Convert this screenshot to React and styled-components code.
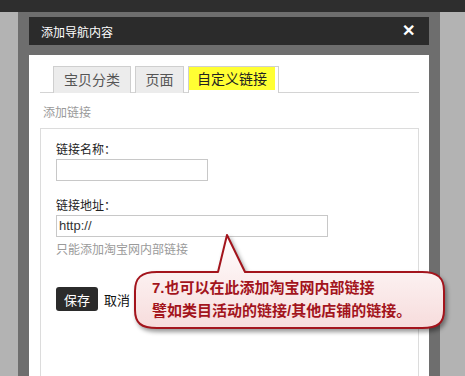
import React from "react";
import styled, { createGlobalStyle } from "styled-components";

const GlobalStyle = createGlobalStyle`
  html, body {
    margin: 0;
    padding: 0;
    background: #b3b3b3;
    font-family: "Liberation Sans", "Noto Sans CJK SC", sans-serif;
    overflow: hidden;
  }
`;

const Page = styled.div`
  position: relative;
  width: 465px;
  height: 376px;
  overflow: hidden;
`;

const TopBar = styled.div`
  height: 12px;
  background: #2e2e2e;
`;

const Frame = styled.div`
  margin-left: 18px;
  width: 400px;
  height: 364px;
  padding: 5px 11px 0 11px;
  background: #6e6e6e;
  display: flex;
  flex-direction: column;
  gap: 10px;
`;

const TitleBar = styled.div`
  height: 28px;
  background: #2b2b2b;
  display: flex;
  align-items: center;
  justify-content: space-between;
  padding: 0 12px 0 12px;
  color: #fff;
  font-size: 12px;
`;

const Close = styled.span`
  font-size: 16px;
  font-weight: bold;
  line-height: 1;
  margin-right: 2px;
`;

const Panel = styled.div`
  flex: 1;
  background: #fff;
  padding: 11px 10px 0 11px;
  display: flex;
  flex-direction: column;
`;

const Tabs = styled.div`
  display: flex;
  gap: 4px;
  padding-left: 13px;
  border-bottom: 1px solid #d4d4d4;
  height: 26px;
`;

const Tab = styled.div`
  box-sizing: border-box;
  height: 27px;
  width: ${p => p.$w}px;
  border: 1px solid #cfcfcf;
  border-bottom: none;
  background: ${p => (p.$active ? "#fff" : "#ececec")};
  color: ${p => (p.$active ? "#222" : "#555")};
  font-size: 14px;
  display: flex;
  align-items: flex-start;
  padding: 0 ${p => (p.$active ? "3px" : "0")} 0 0;
  justify-content: ${p => (p.$active ? "flex-start" : "center")};
  line-height: 26px;
`;

const Highlight = styled.span`
  display: block;
  background: #ffff33;
  height: 23px;
  line-height: 24px;
  flex: 1;
  text-align: center;
`;

const SectionTitle = styled.div`
  font-size: 12px;
  color: #9a9a9a;
  padding: 13px 0 0 3px;
  height: 22px;
  line-height: 14px;
`;

const Box = styled.div`
  flex: 1;
  border: 1px solid #dcdcdc;
  border-bottom: none;
  padding: 13px 16px 0 15px;
  display: flex;
  flex-direction: column;
`;

const Label = styled.div`
  font-size: 12px;
  color: #222;
  line-height: 16px;
  height: 17px;
`;

const Input = styled.div`
  box-sizing: border-box;
  width: ${p => p.$w}px;
  height: 22px;
  border: 1px solid #c8c8c8;
  font-size: 13px;
  color: #333;
  line-height: 20px;
  padding-left: 2px;
  margin-bottom: ${p => p.$mb}px;
`;

const Hint = styled.div`
  font-size: 12px;
  color: #9a9a9a;
  line-height: 16px;
  margin-top: 5px;
`;

const Actions = styled.div`
  display: flex;
  align-items: center;
  gap: 6px;
  margin-top: 29px;
`;

const SaveButton = styled.div`
  width: 42px;
  height: 24px;
  border-radius: 3px;
  background: #2b2b2b;
  color: #fff;
  font-size: 13px;
  display: flex;
  align-items: center;
  justify-content: center;
`;

const CancelLink = styled.span`
  font-size: 13px;
  color: #111;
`;

const Callout = styled.div`
  position: absolute;
  left: 133px;
  top: 233px;
  width: 316px;
  height: 104px;
`;

const CalloutShape = styled.svg`
  position: absolute;
  left: 0;
  top: 0;
  filter: drop-shadow(2px 3px 2px rgba(0, 0, 0, 0.4));
`;

const CalloutText = styled.div`
  position: absolute;
  left: 19px;
  top: 43px;
  font-size: 15px;
  font-weight: bold;
  line-height: 23px;
  color: #a3141c;
  white-space: nowrap;
`;

export default function App() {
  return (
    <Page>
      <GlobalStyle />
      <TopBar />
      <Frame>
        <TitleBar>
          <span>添加导航内容</span>
          <Close>✕</Close>
        </TitleBar>
        <Panel>
          <Tabs>
            <Tab $w={78}>宝贝分类</Tab>
            <Tab $w={49}>页面</Tab>
            <Tab $w={91} $active>
              <Highlight>自定义链接</Highlight>
            </Tab>
          </Tabs>
          <SectionTitle>添加链接</SectionTitle>
          <Box>
            <Label>链接名称：</Label>
            <Input $w={152} $mb={17} />
            <Label>链接地址：</Label>
            <Input $w={272} $mb={0}>http://</Input>
            <Hint>只能添加淘宝网内部链接</Hint>
            <Actions>
              <SaveButton>保存</SaveButton>
              <CancelLink>取消</CancelLink>
            </Actions>
          </Box>
        </Panel>
      </Frame>
      <Callout>
        <CalloutShape width="316" height="104" viewBox="0 0 316 104">
          <defs>
            <linearGradient id="bubbleFill" x1="0" y1="0" x2="0" y2="1">
              <stop offset="0" stopColor="#ffffff" />
              <stop offset="1" stopColor="#f7dcdc" />
            </linearGradient>
          </defs>
          <path
            d="M24 39 L85 39 L94 2 L112 39 L289 39 C305 39 311 45 311 58 L311 77 C311 90 305 95 289 95 L24 95 C8 95 2 90 2 77 L2 58 C2 45 8 39 24 39 Z"
            fill="url(#bubbleFill)"
            stroke="#a3141c"
            strokeWidth="2"
            strokeLinejoin="round"
          />
        </CalloutShape>
        <CalloutText>
          7.也可以在此添加淘宝网内部链接
          <br />
          譬如类目活动的链接/其他店铺的链接。
        </CalloutText>
      </Callout>
    </Page>
  );
}
